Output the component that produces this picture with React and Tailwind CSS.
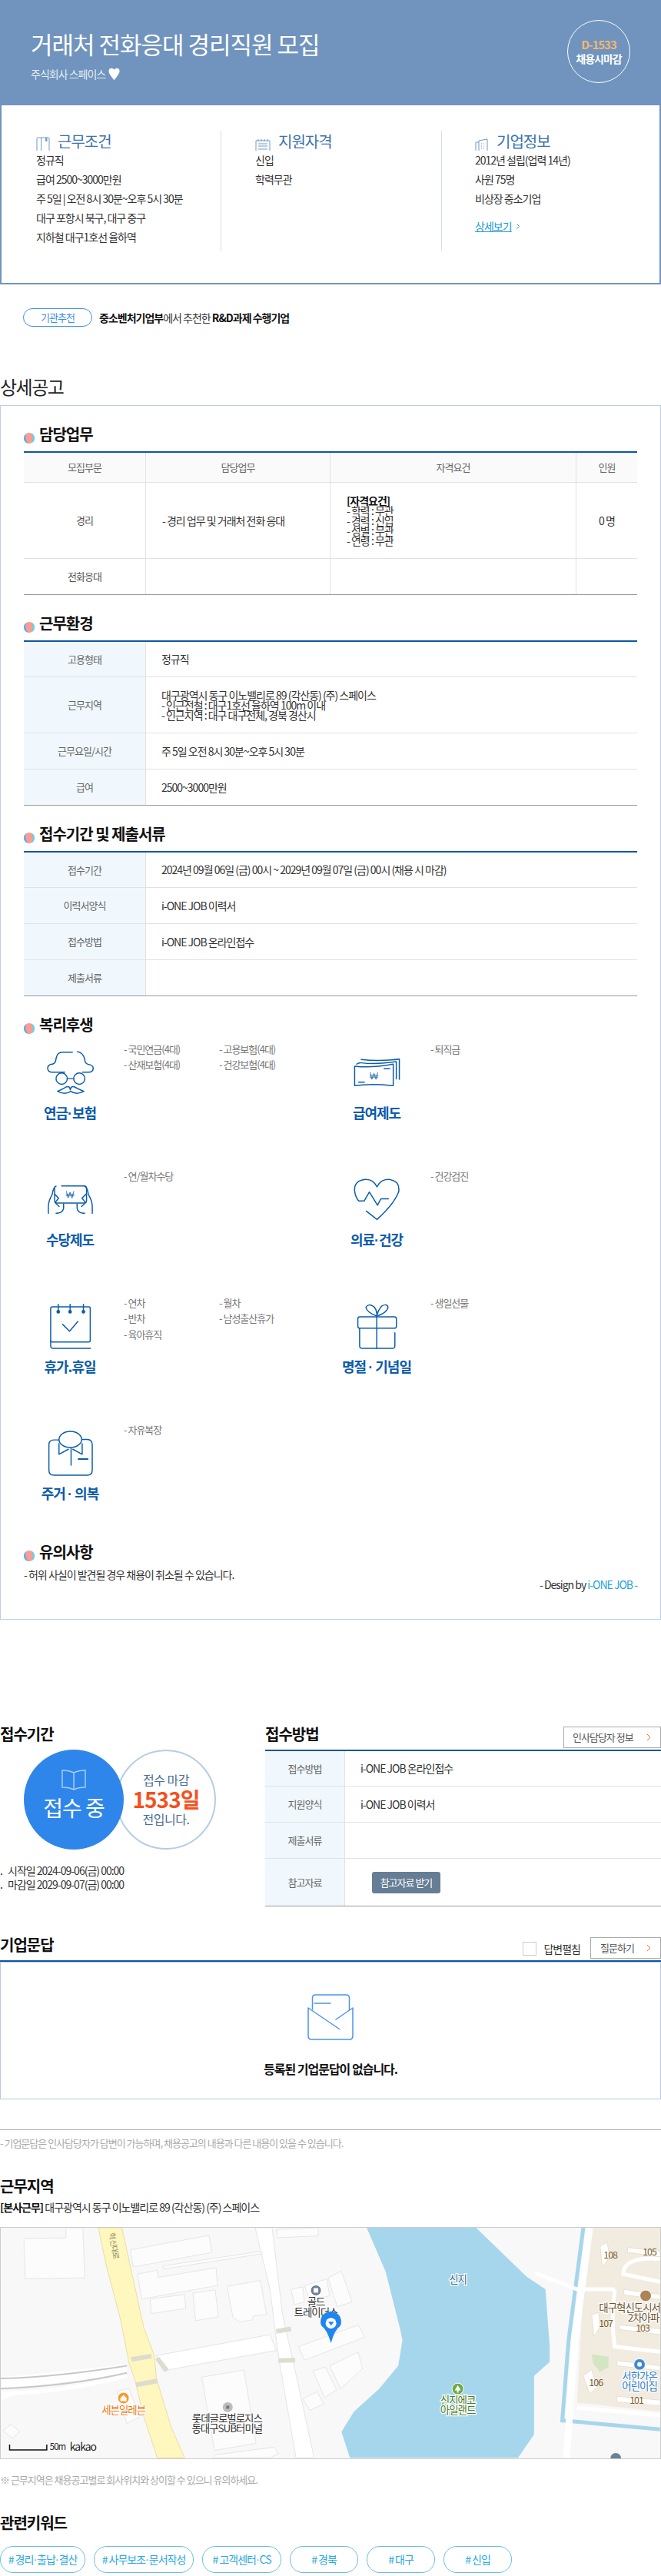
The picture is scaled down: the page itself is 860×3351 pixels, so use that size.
import React from 'react';

const BLUE = '#0b5cad';

function Dot({ s }) {
  const parts = s.split('·');
  return (
    <>
      {parts.map((p, i) => (
        <React.Fragment key={i}>
          {i > 0 && <span className="font-['Liberation_Sans',sans-serif] tracking-[0px]">·</span>}
          {p}
        </React.Fragment>
      ))}
    </>
  );
}

function Bullet() {
  return (
    <svg width="14" height="14" viewBox="0 0 14 14" className="shrink-0 mt-[10px]">
      <circle cx="7" cy="7" r="7" fill="#fb9c90" />
      <path d="M3 1.2 Q0.5 7.5 6 13.9 A7 7 0 0 1 3 1.2Z" fill="#58aeff" />
      <path d="M9.5 0.5 Q13 5 10.5 13 A7 7 0 0 0 9.5 0.5Z" fill="#58d4f5" />
    </svg>
  );
}

function SectionHead({ children }) {
  return (
    <div className="flex items-start gap-[6px] h-[24px] mb-[10px]">
      <Bullet />
      <h3 className="text-[20px] font-bold leading-[24px] text-[#111]">{children}</h3>
    </div>
  );
}

function Chevron() {
  return (
    <svg width="6" height="10" viewBox="0 0 6 10" fill="none" stroke="#f0703a" strokeWidth="1">
      <path d="M1 1 L5 5 L1 9" />
    </svg>
  );
}

function Row({ label, h, last, children }) {
  return (
    <div className={`flex border-b ${last ? 'border-[#999]' : 'border-[#e2e2e2]'} ${h}`}>
      <div className="w-[159px] shrink-0 bg-[#f0f8fd] border-r border-[#e2e2e2] flex items-center justify-center text-[13px] text-[#666]">
        {label}
      </div>
      <div className="flex-1 pl-[20px] flex items-center text-[14px] text-[#333] leading-[21px]">
        <div>{children}</div>
      </div>
    </div>
  );
}

function IconWrap({ children, w = 61, h = 57, vb }) {
  return (
    <svg width={w} height={h} viewBox={vb} fill="none" stroke={BLUE} strokeWidth="4.5" strokeLinecap="round" strokeLinejoin="round">
      {children}
    </svg>
  );
}

const Won = ({ x, y }) => (
  <g transform={`translate(${x} ${y})`} strokeWidth="2.5" strokeLinecap="butt">
    <path d="M-15 -14 L-8 14 L0 -10 L8 14 L15 -14 M-17 -2 H17 M-17 5 H17" />
  </g>
);

const icons = {
  hat: (
    <IconWrap vb="30 20 184 170">
      <path d="M130 24 H90 Q72 24 67 45 L64 60 Q60 72 46 72 Q33 76 33 88 Q35 103 50 103 H100" />
      <path d="M150 22 Q172 26 178 50 L180 62 Q185 72 198 73 Q212 78 212 88 Q210 103 195 103 H170" />
      <circle cx="88" cy="128" r="22" />
      <circle cx="157" cy="128" r="22" />
      <path d="M110 128 H135" />
      <path d="M72 178 Q95 168 108 160 Q120 156 122 172 Q124 156 137 160 Q150 168 175 178 Q145 194 124 178 Q100 194 72 178Z" />
    </IconWrap>
  ),
  money: (
    <IconWrap vb="1228 48 184 112" h={37}>
      <path d="M1232 78 Q1300 86 1384 70 V155 Q1300 145 1232 155 Z" />
      <path d="M1240 70 Q1248 64 1258 65 Q1320 72 1396 60 V128" />
      <path d="M1258 52 Q1330 60 1408 50 V130" />
      <path d="M1348 88 H1370 M1248 141 H1270" strokeWidth="5" />
      <Won x={1308} y={116} />
    </IconWrap>
  ),
  hands: (
    <IconWrap vb="30 543 186 114" h={37}>
      <path d="M88 545 H178 Q188 545 188 555 V604 Q188 614 178 614 H70 Q60 614 60 604 V552" />
      <Won x={122} y={580} />
      <path d="M66 546 Q55 550 50 580 Q35 605 35 628 V655" />
      <path d="M60 578 L76 594 L62 612 L78 628" />
      <path d="M96 617 V635 Q92 655 66 655" />
      <path d="M180 546 Q191 550 196 580 Q211 605 211 628 V655" />
      <path d="M186 578 L170 594 L184 612 L168 628" />
      <path d="M150 617 V635 Q154 655 180 655" />
    </IconWrap>
  ),
  heart: (
    <IconWrap vb="1228 518 184 164" h={55}>
      <path d="M1278 645 L1320 678 Q1385 620 1405 570 Q1412 525 1365 521 Q1335 520 1320 550 Q1305 520 1275 521 Q1230 525 1232 565 Q1235 590 1248 605 H1270 L1290 570 L1322 622 L1335 597 H1365" />
    </IconWrap>
  ),
  cal: (
    <IconWrap vb="30 13 186 180" h={59}>
      <rect x="45" y="25" width="157" height="140" rx="6" />
      <path d="M45 160 V180 Q45 190 55 190 H203" />
      <path d="M75 15 V45 M122 15 V45 M175 15 V45" />
      <circle cx="75" cy="45" r="5" fill={BLUE} />
      <circle cx="122" cy="45" r="5" fill={BLUE} />
      <circle cx="175" cy="45" r="5" fill={BLUE} />
      <path d="M93 95 L120 122 L153 83" />
    </IconWrap>
  ),
  gift: (
    <IconWrap vb="1228 13 186 180" h={59}>
      <rect x="1245" y="65" width="153" height="45" rx="8" />
      <path d="M1392 128 V180 Q1392 190 1382 190 H1262 Q1252 190 1252 180 V110" />
      <path d="M1320 65 V190" />
      <path d="M1320 62 Q1282 48 1277 28 Q1285 10 1308 24 Q1322 38 1320 62 Q1325 38 1340 22 Q1362 10 1365 28 Q1358 50 1320 62Z" />
    </IconWrap>
  ),
  shirt: (
    <IconWrap vb="30 508 186 180" h={59}>
      <path d="M78 545 H58 Q38 545 38 565 V665 Q38 685 58 685 H190 Q210 685 210 665 V565 Q210 543 190 543 H170" />
      <ellipse cx="123" cy="543" rx="45" ry="32" />
      <path d="M78 560 V602 L115 582 M170 560 V602 L133 582 M126 578 V645" />
      <path d="M155 621 H192" strokeWidth="6" />
    </IconWrap>
  ),
};

const welfare = [
  { t: '연금·보험', i: 'hat', l: ['국민연금(4대)', '고용보험(4대)', '산재보험(4대)', '건강보험(4대)'] },
  { t: '급여제도', i: 'money', l: ['퇴직금'] },
  { t: '수당제도', i: 'hands', l: ['연/월차수당'] },
  { t: '의료·건강', i: 'heart', l: ['건강검진'] },
  { t: '휴가.휴일', i: 'cal', l: ['연차', '월차', '반차', '남성출산휴가', '육아휴직'] },
  { t: '명절 · 기념일', i: 'gift', l: ['생일선물'] },
  { t: '주거 · 의복', i: 'shirt', l: ['자유복장'] },
];

function Welfare() {
  return (
    <div className="mt-[6px] grid grid-cols-2 grid-rows-[165px_165px_165px_157px]">
      {welfare.map((w) => (
        <div key={w.t} className="flex">
          <div className="w-[120px] mr-[10px] flex flex-col items-center pt-[10px]">
            <div className="h-[60px] flex items-center justify-center">{icons[w.i]}</div>
            <div className="mt-[10px] text-[18px] font-bold leading-[24px] text-[#0b5cad] whitespace-nowrap"><Dot s={w.t} /></div>
          </div>
          <ul className="grid grid-cols-[124px_124px] auto-rows-[20.3px] content-start text-[13px] leading-[20px] text-[#777]">
            {w.l.map((x) => (
              <li key={x} className="whitespace-nowrap">- {x}</li>
            ))}
          </ul>
        </div>
      ))}
    </div>
  );
}

function MapView() {
  const buildings = [
    '55,100 155,98 155,58 195,58 200,255 58,258',
    '308,145 495,88 502,155 315,212',
    '325,240 372,225 375,253 512,215 515,285 335,338',
    '385,208 620,150 622,160 388,220',
    '355,338 437,320 440,375 358,395',
    '457,315 510,302 517,408 463,423',
    '538,288 617,265 632,398 600,405 598,420 568,428 552,410',
    '690,300 718,290 722,350 698,360',
    '722,285 775,260 782,325 735,345',
    '778,255 810,228 835,350 800,368',
    '708,525 850,440 865,488 722,578',
    '742,620 772,605 798,695 770,725',
    '782,600 850,547 860,612 808,690',
    '718,730 752,702 768,750 735,775',
    '478,645 578,617 607,905 508,933',
    '655,65 755,58 755,90 658,97',
    '510,950 650,920 660,945 640,962 505,962',
    '5,855 25,830 45,860 28,885',
    '275,700 305,690 330,800 300,828',
  ];
  const apt = [
    '1425,130 1442,115 1448,175 1430,212',
    '1490,135 1568,150 1568,172 1490,155',
    '1480,300 1568,320 1568,340 1482,322',
    '1405,400 1422,390 1425,450 1410,485',
    '1470,440 1568,455 1568,478 1472,458',
    '1465,580 1568,600 1568,620 1465,600',
    '1385,640 1405,615 1418,685 1400,710',
    '1465,720 1568,735 1568,758 1465,742',
  ];
  const lbl = (x, y, s, fill, extra = {}) => (
    <text key={s} x={x} y={y} textAnchor="middle" fill={fill} fontSize="13.5" stroke="#fff" strokeWidth="2.5" paintOrder="stroke" {...extra}>{s}</text>
  );
  return (
    <div className="h-[302px] border border-[#ccc] bg-[#f8f8f8]">
      <svg viewBox="0 0 860 302" preserveAspectRatio="none" className="block w-full h-full">
        <g transform="scale(0.5485 0.3333) translate(0 -58)">
          <polygon vectorEffect="non-scaling-stroke" points="1395,58 1568,58 1568,780 1370,745 1385,300" fill="#f2ece0" />
          <polygon vectorEffect="non-scaling-stroke" points="870,58 915,230 950,460 955,500 945,600 900,690 840,780 810,860 830,962 1230,962 1268,870 1268,640 1305,585 1305,520 1295,300 1250,250 1200,170 1130,58" fill="#a6d6ec" />
          <path vectorEffect="non-scaling-stroke" d="M1385 58 L1350 500 L1335 815 L1568 850" fill="none" stroke="#a6d6ec" strokeWidth="5" />
          <path vectorEffect="non-scaling-stroke" d="M1400 58 L1365 500 L1345 962" fill="none" stroke="#fff" strokeWidth="9" />
          <path vectorEffect="non-scaling-stroke" d="M1370 765 L1568 795 M1270 235 L1370 300 H1460 M1568 180 Q1480 170 1480 240 L1568 270 M1460 300 Q1450 430 1460 525 L1568 545" fill="none" stroke="#fff" strokeWidth="5" />
          <polygon points="1405,555 1445,565 1445,605 1425,625 1408,590" fill="#d4e5c4" />
          {apt.map((p) => <polygon key={p} points={p} fill="#fff" stroke="#e8e0d0" vectorEffect="non-scaling-stroke" />)}
          <polygon vectorEffect="non-scaling-stroke" points="605,58 645,58 670,400 700,620 745,962 702,962 660,560 640,300" fill="#fff" stroke="#e5e5e5" />
          <polygon vectorEffect="non-scaling-stroke" points="370,560 640,478 655,540 385,620" fill="#fff" stroke="#e5e5e5" />
          <path vectorEffect="non-scaling-stroke" d="M0 665 Q130 650 300 615" fill="none" stroke="#fff" strokeWidth="14" />
          <path vectorEffect="non-scaling-stroke" d="M0 650 Q130 645 300 600 M0 690 Q160 680 300 628" fill="none" stroke="#c8c8c8" strokeWidth="2" />
          <path vectorEffect="non-scaling-stroke" d="M0 710 Q150 705 300 640 M0 730 L30 710" fill="none" stroke="#fff" strokeWidth="5" />
          {buildings.map((p) => <polygon key={p} points={p} fill="#fcfcfc" stroke="#e6e6e6" vectorEffect="non-scaling-stroke" />)}
          <polygon vectorEffect="non-scaling-stroke" points="232,58 288,58 340,450 365,560 370,650 405,840 437,962 372,962 340,800 318,650 305,590 285,420 250,200" fill="#fff7bd" stroke="#e8dfa8" />
          <path vectorEffect="non-scaling-stroke" d="M310 575 L358 562 M322 675 L372 660 M372 570 L395 620 M655 465 L690 455 M660 580 L700 578" fill="none" stroke="#dcdcd0" strokeWidth="6" />
        </g>
        <text x="0" y="0" transform="translate(141 7) rotate(80)" fontSize="10" fill="#8a8a70">혁 신대로</text>
        {lbl(596, 72, '신지', '#3d6f8c')}
        <circle cx="411" cy="82" r="7" fill="#6f8192" stroke="#fff" />
        <rect x="408" y="79" width="6" height="6" fill="#fff" />
        {lbl(411, 102, '골드', '#333')}
        {lbl(411, 116, '트레이더스', '#333')}
        <path d="M430.6 151 Q426 134 418 128 A13.5 13.5 0 1 1 443 128 Q435 134 430.6 151Z" fill="#1f86f0" />
        <circle cx="430.6" cy="125" r="7" fill="#fff" />
        <path d="M427 123 H434.5 L430.7 128Z" fill="#1f86f0" />
        <circle cx="160" cy="223" r="7.5" fill="#f79a2a" stroke="#fff" />
        <path d="M156 223 L160 219 L164 223 V227 H156Z" fill="#fff" />
        {lbl(160, 244, '세븐일레븐', '#ee7a1c')}
        <circle cx="296" cy="235" r="7" fill="#bdbdbd" stroke="#fff" />
        <rect x="294" y="233" width="4" height="4" fill="#777" />
        {lbl(295, 255, '롯데글로벌로지스', '#333')}
        {lbl(295, 268, '동대구SUB터미널', '#333')}
        <circle cx="596" cy="211" r="7.5" fill="#6eaa45" stroke="#fff" />
        <path d="M596 206 L600 213 H592Z M595 213 H597 V216 H595Z" fill="#fff" />
        {lbl(596, 231, '신지에코', '#4c7d2a')}
        {lbl(596, 244, '아일랜드', '#4c7d2a')}
        <circle cx="841" cy="89" r="7.5" fill="#a98558" stroke="#fff" />
        {lbl(820, 110, '대구혁신도시서', '#6e5430')}
        {lbl(838, 123, '2차아파', '#6e5430')}
        <circle cx="833" cy="179" r="7.5" fill="#3e8ad6" stroke="#fff" />
        <circle cx="833" cy="179" r="3" fill="#fff" />
        {lbl(833, 199, '서한가온', '#2b7bc9')}
        {lbl(833, 212, '어린이집', '#2b7bc9')}
        {[[795, 40, '108'], [846, 36, '105'], [789, 130, '107'], [837, 136, '103'], [776, 207, '106'], [829, 231, '101']].map(([x, y, s]) => (
          <text key={s} x={x} y={y} textAnchor="middle" fontSize="12.5" fill="#7a6035">{s}</text>
        ))}
        <circle cx="802" cy="302" r="7" fill="#6f8192" />
        <path d="M11.5 284 V291 H60 V284" fill="none" stroke="#111" strokeWidth="1.5" />
        <text x="64" y="291" fontSize="11.5" fill="#222">50m</text>
        <text x="90" y="292" fontSize="14" fill="#222">kakao</text>
      </svg>
    </div>
  );
}

const keywords = [
  ['# 경리·출납·결산', 'w-[111px]'],
  ['# 사무보조·문서작성', 'w-[130px]'],
  ['# 고객센터·CS', 'w-[103px]'],
  ['# 경북', 'w-[89px]'],
  ['# 대구', 'w-[89px]'],
  ['# 신입', 'w-[89px]'],
];

function Cond({ icon, title, rows, className, children }) {
  return (
    <div className={`h-[157px] ${className}`}>
      <div className="flex items-end gap-[10px] h-[26px]">
        {icon}
        <span className="text-[20px] leading-[24px] text-[#3a72b0]">{title}</span>
      </div>
      <ul className="text-[14px] leading-[25px] text-[#333]">
        {rows.map((r) => <li key={r} className="whitespace-nowrap">{r}</li>)}
      </ul>
      {children}
    </div>
  );
}

export default function App() {
  return (
    <div className="w-[860px] bg-white font-['Noto_Sans_CJK_KR','Noto_Sans',sans-serif] tracking-[-1px]">
      {/* hero */}
      <header className="h-[137px] bg-[#7094bd] pl-[40px] pr-[40px] flex justify-between">
        <div className="pt-[36px]">
          <h1 className="text-[31px] leading-[42px] text-white">거래처 전화응대 경리직원 모집</h1>
          <div className="mt-[8px] flex items-center gap-[3px] text-[14px] leading-[20px] text-[#e6edf5]">
            주식회사 스페이스
            <svg width="17" height="17" viewBox="0 0 24 24" fill="#fff"><path d="M12 23 Q2 11 2 7 Q2 1 7 1 Q10.5 1 12 4 Q13.5 1 17 1 Q22 1 22 7 Q22 11 12 23Z" /></svg>
          </div>
        </div>
        <div className="mt-[26px] w-[82px] h-[82px] rounded-full border border-white flex flex-col items-center justify-center leading-[18px]">
          <span className="text-[15px] font-bold text-[#f5b76f]">D-1533</span>
          <span className="text-[14px] font-bold text-white">채용시마감</span>
        </div>
      </header>

      <section className="h-[233px] border-x-2 border-b-2 border-[#7094bd] pt-[33px] grid grid-cols-[285px_287px_1fr]">
        <Cond className="pl-[45px]" title="근무조건"
          icon={<svg width="18" height="18" viewBox="0 0 18 18" fill="none" stroke="#6f9bcb"><path d="M1 18 V2 Q1 1 2 1 H16 Q17 1 17 2 V18 M6.5 18 V1" /><path d="M12 1 H14.5 V6 H12Z" fill="#6f9bcb" stroke="none" /></svg>}
          rows={['정규직', '급여 2500~3000만원', '주 5일 | 오전 8시 30분~오후 5시 30분', '대구 포항시 북구, 대구 중구', '지하철 대구1호선 율하역']} />
        <Cond className="border-l border-[#d5dfe9] pl-[44px]" title="지원자격"
          icon={<svg width="20" height="16" viewBox="0 0 20 16" fill="none" stroke="#6f9bcb"><path d="M1 16 V3 H19 V16 M4 1 V4 M8 1 V4 M12 1 V4 M16 1 V4 M4 7 H16 M4 10 H16 M4 14 H16" /></svg>}
          rows={['신입', '학력무관']} />
        <Cond className="border-l border-[#d5dfe9] pl-[43px]" title="기업정보"
          icon={<svg width="18" height="16" viewBox="0 0 18 16" fill="none" stroke="#6f9bcb"><path d="M1 16 V5 H5 M5 16 V3 L16 1 V16 M8 7 H9 M11 7 H12 M8 10 H9 M11 10 H12 M8 13 H9 M11 13 H12" /></svg>}
          rows={['2012년 설립(업력 14년)', '사원 75명', '비상장 중소기업']}>
          <div className="mt-[11px] flex items-center gap-[6px] text-[14px] leading-[25px] text-[#1e9ad6]">
            <span className="underline">상세보기</span>
            <svg width="4" height="7" viewBox="0 0 4 7" fill="none" stroke="#1e9ad6"><path d="M0.5 0.5 L3.5 3.5 L0.5 6.5" /></svg>
          </div>
        </Cond>
      </section>

      <div className="mt-[31px] ml-[30px] flex items-center gap-[9px] h-[24px]">
        <span className="w-[90px] h-[24px] rounded-[12px] border border-[#3b8fe8] flex items-center justify-center text-[13px] text-[#3b8fe8]">기관추천</span>
        <p className="text-[14px] text-[#333]"><b className="text-[#111]">중소벤처기업부</b>에서 추천한 <b className="text-[#111]">R&amp;D과제 수행기업</b></p>
      </div>

      <h2 className="mt-[62px] text-[24px] leading-[32px] text-[#222] tracking-[-1.5px]">상세공고</h2>

      {/* detail */}
      <section className="mt-[8px] h-[1580px] border border-[#bccfe3] px-[30px] pt-[25px]">
        <SectionHead>담당업무</SectionHead>
        <div className="border-t-2 border-[#0b57a4]">
          <div className="flex h-[39px] bg-[#fafafa] border-b border-[#e2e2e2] text-[13px] text-[#666] text-center">
            <div className="w-[159px] border-r border-[#e2e2e2] flex items-center justify-center">모집부문</div>
            <div className="w-[240px] border-r border-[#e2e2e2] flex items-center justify-center">담당업무</div>
            <div className="w-[320px] border-r border-[#e2e2e2] flex items-center justify-center">자격요건</div>
            <div className="flex-1 flex items-center justify-center">인원</div>
          </div>
          <div className="flex h-[99px] border-b border-[#e2e2e2] text-[14px] text-[#333]">
            <div className="w-[159px] border-r border-[#e2e2e2] flex items-center justify-center text-[13px] text-[#555]">경리</div>
            <div className="w-[240px] border-r border-[#e2e2e2] flex items-center pl-[21px]">- 경리 업무 및 거래처 전화 응대</div>
            <div className="w-[320px] border-r border-[#e2e2e2] flex flex-col justify-center pl-[21px] leading-[13px]">
              <b className="text-[#111]">[자격요건]</b>
              <span>- 학력 : 무관</span>
              <span>- 경력 : 신입</span>
              <span>- 성별 : 무관</span>
              <span>- 연령 : 무관</span>
            </div>
            <div className="flex-1 flex items-center justify-center">0 명</div>
          </div>
          <div className="flex h-[47px] border-b border-[#999] text-[13px] text-[#555]">
            <div className="w-[159px] border-r border-[#e2e2e2] flex items-center justify-center">전화응대</div>
            <div className="w-[240px] border-r border-[#e2e2e2]" />
            <div className="w-[320px] border-r border-[#e2e2e2]" />
            <div className="flex-1" />
          </div>
        </div>

        <div className="mt-[25px]"><SectionHead>근무환경</SectionHead></div>
        <div className="border-t-2 border-[#0b57a4]">
          <Row label="고용형태" h="h-[46px]">정규직</Row>
          <Row label="근무지역" h="h-[73px]">
            <p className="leading-[13px]">대구광역시 동구 이노밸리로 89 (각산동) (주) 스페이스</p>
            <p className="leading-[13px]">- 인근전철 : 대구1호선 율하역 100m 이내</p>
            <p className="leading-[13px]">- 인근지역 : 대구 대구전체, 경북 경산시</p>
          </Row>
          <Row label="근무요일/시간" h="h-[47px]">주 5일 오전 8시 30분~오후 5시 30분</Row>
          <Row label="급여" h="h-[47px]" last>2500~3000만원</Row>
        </div>

        <div className="mt-[25px]"><SectionHead>접수기간 및 제출서류</SectionHead></div>
        <div className="border-t-2 border-[#0b57a4]">
          <Row label="접수기간" h="h-[46px]">2024년 09월 06일 (금) 00시 ~ 2029년 09월 07일 (금) 00시 (채용 시 마감)</Row>
          <Row label="이력서양식" h="h-[47px]">i-ONE JOB 이력서</Row>
          <Row label="접수방법" h="h-[47px]">i-ONE JOB 온라인접수</Row>
          <Row label="제출서류" h="h-[47px]" last />
        </div>

        <div className="mt-[25px]"><SectionHead>복리후생</SectionHead></div>
        <Welfare />

        <SectionHead>유의사항</SectionHead>
        <p className="mt-[-3px] text-[14px] leading-[20px] text-[#333]">- 허위 사실이 발견될 경우 채용이 취소될 수 있습니다.</p>
        <p className="mt-[-7px] text-right text-[14px] leading-[20px] text-[#333]">- Design by <span className="text-[#1fa2e0]">i-ONE JOB -</span></p>
      </section>

      {/* apply */}
      <div className="mt-[137px] flex">
        <div className="w-[345px]">
          <h3 className="text-[20px] font-bold leading-[24px] text-[#111]">접수기간</h3>
          <div className="mt-[8px] ml-[31px] flex">
            <div className="relative z-10 w-[130px] h-[130px] rounded-full bg-[#2f86ea] flex flex-col items-center pt-[26px]">
              <svg width="32" height="27" viewBox="0 0 32 27" fill="none" stroke="#a5cdf6" strokeWidth="1.5"><path d="M16 4 Q10 1 1 1 V23 Q10 23 16 26 Q22 23 31 23 V1 Q22 1 16 4 V26" /></svg>
              <span className="mt-[2px] text-[28px] leading-[40px] text-white">접수 중</span>
            </div>
            <div className="ml-[-10px] w-[130px] h-[130px] rounded-full border-2 border-[#b5cde5] flex flex-col items-center justify-center text-[#4a6d96]">
              <span className="text-[16px] leading-[22px] tracking-[-0.5px]">접수 마감</span>
              <span className="text-[28px] font-bold leading-[28px] text-[#f4511e]">1533일</span>
              <span className="text-[16px] leading-[24px] tracking-[-0.5px]">전입니다.</span>
            </div>
          </div>
          <ul className="mt-[18px] text-[14px] leading-[18px] text-[#333]">
            <li className="flex"><span className="w-[10px]">.</span>시작일 2024-09-06(금) 00:00</li>
            <li className="flex"><span className="w-[10px]">.</span>마감일 2029-09-07(금) 00:00</li>
          </ul>
        </div>
        <div className="flex-1">
          <div className="flex justify-between h-[32px]">
            <h3 className="text-[20px] font-bold leading-[24px] text-[#111]">접수방법</h3>
            <button className="mt-[2px] w-[127px] h-[28px] border border-[#aaa] flex items-center justify-between pl-[11px] pr-[12px] text-[13px] text-[#555]">인사담당자 정보<Chevron /></button>
          </div>
          <div className="border-t-2 border-[#0b57a4]">
            {[['접수방법', 'i-ONE JOB 온라인접수', 'h-[46px]'], ['지원양식', 'i-ONE JOB 이력서', 'h-[47px]'], ['제출서류', '', 'h-[47px]']].map(([a, b, h]) => (
              <div key={a} className={`flex border-b border-[#e2e2e2] ${h}`}>
                <div className="w-[104px] bg-[#f0f8fd] border-r border-[#e2e2e2] flex items-center justify-center text-[13px] text-[#666]">{a}</div>
                <div className="flex-1 pl-[20px] flex items-center text-[14px] text-[#333]">{b}</div>
              </div>
            ))}
            <div className="flex border-b border-[#999] h-[62px]">
              <div className="w-[104px] bg-[#f0f8fd] border-r border-[#e2e2e2] flex items-center justify-center text-[13px] text-[#666]">참고자료</div>
              <div className="flex-1 pl-[35px] flex items-center">
                <button className="w-[89px] h-[28px] rounded-[3px] bg-[#667e95] text-[13px] text-white">참고자료 받기</button>
              </div>
            </div>
          </div>
        </div>
      </div>

      {/* q&a */}
      <div className="mt-[38px] flex justify-between h-[32px]">
        <h3 className="text-[20px] font-bold leading-[24px] text-[#111]">기업문답</h3>
        <div className="flex items-start">
          <span className="mt-[8px] w-[18px] h-[18px] border border-[#ccc]" />
          <span className="ml-[9px] mt-[7px] text-[14px] leading-[20px] text-[#333]">답변펼침</span>
          <button className="ml-[13px] mt-[2px] w-[92px] h-[28px] border border-[#aaa] flex items-center justify-between pl-[12px] pr-[12px] text-[13px] text-[#555]">질문하기<Chevron /></button>
        </div>
      </div>
      <div className="border-t-2 border-[#0b57a4]">
        <div className="h-[179px] border border-[#b8cbdf] flex flex-col items-center pt-[41px]">
          <svg width="60" height="60" viewBox="0 0 60 60" fill="none" stroke="#4a94ee" strokeWidth="1.5" strokeLinecap="round" strokeLinejoin="round">
            <path d="M6.5 20 V5 Q6.5 1 10.5 1 H50.5 Q54.5 1 54.5 5 V21" />
            <path d="M9 12 H30" />
            <path d="M41.5 45.5 L1 18 V54 Q1 59 5 59 H55 Q59 59 59 54 V18 L37 33" />
          </svg>
          <p className="mt-[25px] text-[16px] font-bold leading-[24px] text-[#111]">등록된 기업문답이 없습니다.</p>
        </div>
      </div>

      <div className="mt-[39px] border-t border-[#aaa] pt-[7px]">
        <p className="text-[13px] leading-[20px] text-[#aaa]">- 기업문답은 인사담당자가 답변이 가능하며, 채용공고의 내용과 다른 내용이 있을 수 있습니다.</p>
      </div>

      <h3 className="mt-[34px] text-[20px] font-bold leading-[24px] text-[#111]">근무지역</h3>
      <p className="mt-[5px] text-[14px] leading-[20px] text-[#333]"><b className="text-[#111]">[본사근무]</b> 대구광역시 동구 이노밸리로 89 (각산동) (주) 스페이스</p>
      <div className="mt-[16px]"><MapView /></div>
      <p className="mt-[17px] text-[13px] leading-[20px] text-[#aaa]">※ 근무지역은 채용공고별로 회사위치와 상이할 수 있으니 유의하세요.</p>

      <h3 className="mt-[34px] text-[20px] font-bold leading-[24px] text-[#111]">관련키워드</h3>
      <div className="mt-[18px] pb-[2px] flex gap-[11px]">
        {keywords.map(([k, w]) => (
          <span key={k} className={`${w} h-[35px] rounded-[17px] border border-[#6cbde8] flex items-center justify-center text-[14px] text-[#29a9e0] whitespace-nowrap`}><Dot s={k} /></span>
        ))}
      </div>
    </div>
  );
}
